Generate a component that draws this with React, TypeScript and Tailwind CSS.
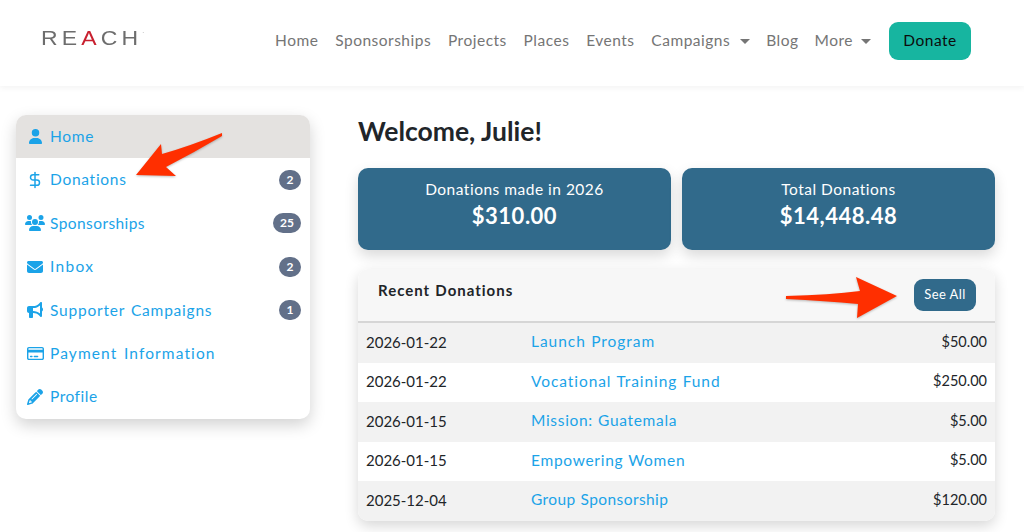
import { DollarSign } from 'lucide-react';
import { FaUser, FaUsers, FaEnvelope, FaBullhorn, FaRegCreditCard, FaPencil } from 'react-icons/fa6';

const navLinks = ['Home', 'Sponsorships', 'Projects', 'Places', 'Events', 'Campaigns', 'Blog', 'More'];

const sideItems = [
  { label: 'Home', icon: FaUser, size: 15, track: 'tracking-[0.7px]', active: true },
  { label: 'Donations', icon: DollarSign, size: 18, track: 'tracking-[0.72px]', badge: '2' },
  { label: 'Sponsorships', icon: FaUsers, size: 20, track: 'tracking-[0.42px]', badge: '25' },
  { label: 'Inbox', icon: FaEnvelope, size: 16, track: 'tracking-[1.3px]', badge: '2' },
  { label: 'Supporter Campaigns', icon: FaBullhorn, size: 16, track: 'tracking-[0.78px]', badge: '1' },
  { label: 'Payment Information', icon: FaRegCreditCard, size: 17, track: 'tracking-[1.11px]' },
  { label: 'Profile', icon: FaPencil, size: 16, track: 'tracking-[0.5px]' },
];

const donations = [
  { date: '2026-01-22', name: 'Launch Program', amount: '$50.00', track: 'tracking-[0.96px]' },
  { date: '2026-01-22', name: 'Vocational Training Fund', amount: '$250.00', track: 'tracking-[0.925px]' },
  { date: '2026-01-15', name: 'Mission: Guatemala', amount: '$5.00', track: 'tracking-[0.68px]' },
  { date: '2026-01-15', name: 'Empowering Women', amount: '$5.00', track: 'tracking-[0.71px]' },
  { date: '2025-12-04', name: 'Group Sponsorship', amount: '$120.00', track: 'tracking-[0.41px]' },
];

export default function App() {
  return (
    <div className="relative h-[532px] w-[1024px] overflow-hidden bg-white font-['Lato',sans-serif] text-[#212529]">
      <header className="flex h-[86px] items-center justify-between pb-[4px] pl-[41px] pr-[53px] shadow-[0_2px_6px_rgba(0,0,0,0.05)]">
        <div className="mb-[7px] flex origin-left scale-x-[1.15] items-start font-['Liberation_Sans',sans-serif] text-[20px] leading-none tracking-[3.6px] text-[#6d6d6d]">
          RE<span className="text-[#c8202f]">A</span>CH<span className="text-[6px] leading-none tracking-normal">.</span>
        </div>
        <nav className="flex items-center gap-4 text-[15.5px] tracking-[0.5px] text-[#757575]">
          {navLinks.map((link, i) => (
            <a key={link} className={`flex items-center ${i < 5 ? 'mr-[0.8px]' : ''}`}>
              {link}
              {link === 'Campaigns' && <span className="ml-[10px] border-x-[5px] border-t-[5px] border-x-transparent border-t-[#757575]" />}
              {link === 'More' && <span className="ml-[8px] border-x-[5px] border-t-[5px] border-x-transparent border-t-[#757575]" />}
            </a>
          ))}
          <button className="ml-[2px] h-[38px] w-[82px] rounded-[9px] bg-[#17b5a0] text-[15.5px] tracking-[0.5px] text-[#0c0c0c]">Donate</button>
        </nav>
      </header>

      <div className="flex items-start pl-4 pr-[29px] pt-[29px]">
        <aside className="w-[294px] shrink-0 overflow-hidden rounded-[10px] bg-white shadow-[0_6px_16px_rgba(0,0,0,0.18)]">
          {sideItems.map((item) => {
            const Icon = item.icon;
            return (
              <div key={item.label} className={`flex h-[43.4px] items-center px-[9px] text-[15.5px] text-[#1ba3e8] [word-spacing:1.5px] ${item.active ? 'bg-[#e4e2e0]' : ''}`}>
                <span className="flex w-[20px] justify-center"><Icon size={item.size} /></span>
                <span className={`ml-[5px] ${item.track}`}>{item.label}</span>
                {item.badge && (
                  <span className="ml-auto flex h-5 min-w-[22px] items-center justify-center rounded-full bg-[#627089] px-[7px] text-[12px] font-bold text-white">{item.badge}</span>
                )}
              </div>
            );
          })}
        </aside>

        <main className="ml-[48px] flex-1">
          <h1 className="h-[53px] text-[26.5px] leading-[32px] font-bold">Welcome, Julie!</h1>
          <div className="grid grid-cols-2 gap-[11px]">
            <div className="flex h-[82px] flex-col items-center rounded-[10px] bg-[#316a8b] pt-[10px] text-white shadow-[0_6px_14px_rgba(0,0,0,0.15)]">
              <div className="text-[15.5px] leading-[22px] tracking-[0.5px]">Donations made in 2026</div>
              <div className="text-[22px] leading-[32px] font-bold tracking-[0.5px]">$310.00</div>
            </div>
            <div className="flex h-[82px] flex-col items-center rounded-[10px] bg-[#316a8b] pt-[10px] text-white shadow-[0_6px_14px_rgba(0,0,0,0.15)]">
              <div className="text-[15.5px] leading-[22px] tracking-[0.5px]">Total Donations</div>
              <div className="text-[22px] leading-[32px] font-bold tracking-[0.5px]">$14,448.48</div>
            </div>
          </div>

          <section className="mt-[19px] overflow-hidden rounded-[10px] bg-white shadow-[0_5px_14px_rgba(0,0,0,0.16)]">
            <div className="flex h-[54px] items-center justify-between border-b-2 border-[#d6d6d6] bg-[#f7f7f7] pl-5 pr-[19px]">
              <span className="mb-[10px] text-[15px] font-bold tracking-[1px] [word-spacing:0.5px]">Recent Donations</span>
              <button className="h-[32px] w-[62px] rounded-[9px] bg-[#316a8b] text-[13px] tracking-[0.4px] text-white">See All</button>
            </div>
            {donations.map((row, i) => (
              <div key={i} className={`flex h-[39.5px] items-center px-2 pb-[2px] ${i % 2 === 0 ? 'bg-[#f2f2f2]' : 'bg-white'}`}>
                <span className="w-[165px] text-[15px]">{row.date}</span>
                <a className={`text-[15.5px] text-[#1ba3e8] [word-spacing:0.5px] ${row.track}`}>{row.name}</a>
                <span className="ml-auto text-[14.5px]">{row.amount}</span>
              </div>
            ))}
          </section>
        </main>
      </div>

      {/* red annotation arrows */}
      <svg className="pointer-events-none absolute left-0 top-0 drop-shadow-[0_1px_1px_rgba(0,0,0,0.25)]" width="1024" height="532">
        <path d="M222 133 Q190 146 162 154 L161 144 L136 175 L176 176 L166 167 Q195 152 222 136 Z" fill="#ff2f00" />
        <path d="M786 296 Q830 295 860 291 L856 277 L897 296 L857 318 L858 304 Q825 301 786 299 Z" fill="#ff2f00" />
      </svg>
    </div>
  );
}
